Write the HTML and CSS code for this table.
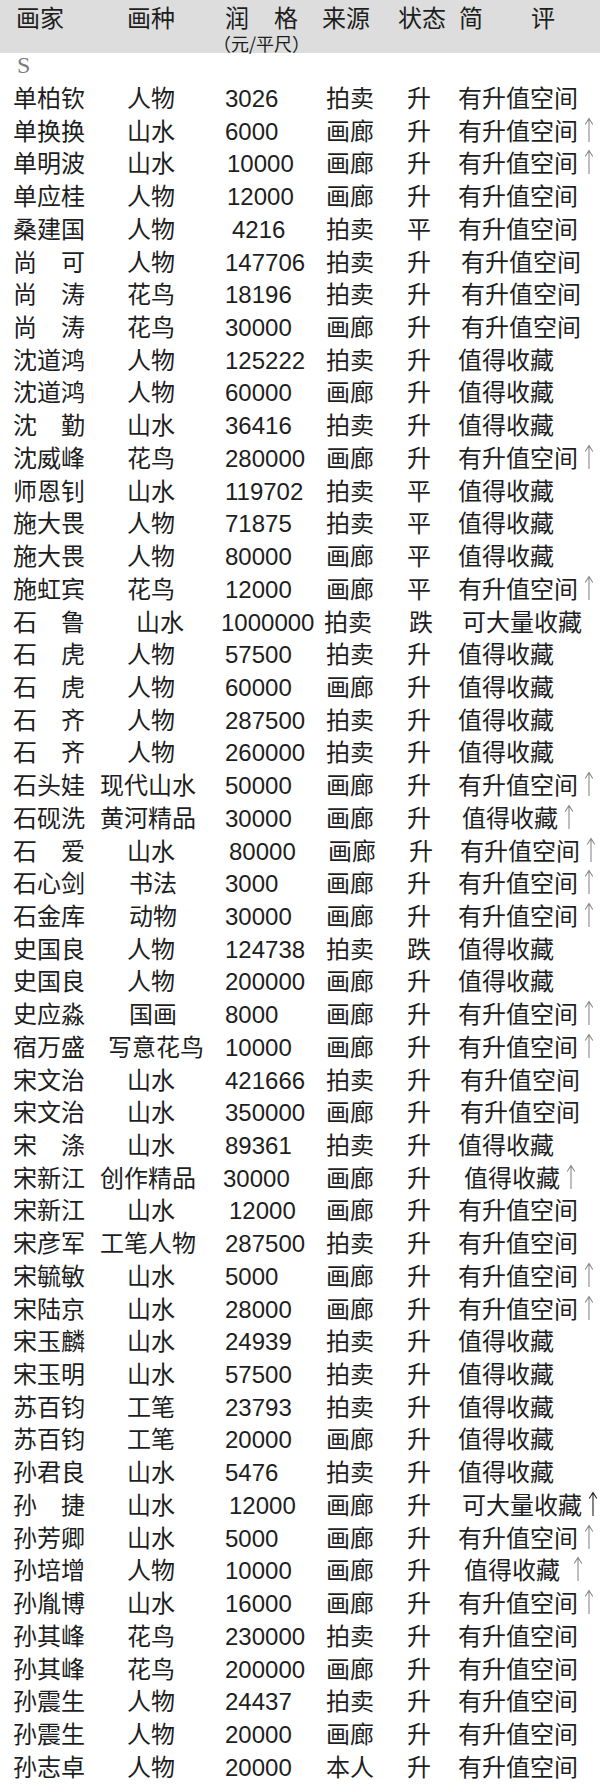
FILE: index.html
```html
<!DOCTYPE html>
<html lang="zh-CN">
<head>
<meta charset="utf-8">
<title>画家润格</title>
<link rel="stylesheet" href="styles.css">
</head>
<body>
<svg class="defs" width="0" height="0" aria-hidden="true">
  <symbol id="up" viewBox="0 0 10 25">
    <path d="M5 1.5V25M1.2 7.5L5 1.5L8.8 7.5" fill="none" stroke="currentColor" stroke-width="1.1"/>
  </symbol>
</svg>
<div class="page">
  <div class="head">
    <div class="hc">画家</div>
    <div class="hc">画种</div>
    <div class="hc hprice">
      <div class="pair"><span>润</span><span>格</span></div>
      <div class="unit">（元/平尺）</div>
    </div>
    <div class="hc">来源</div>
    <div class="hc">状态</div>
    <div class="hc pair wide"><span>简</span><span>评</span></div>
  </div>
  <div class="letter">S</div>
  <div class="list">
    <div class="row"><span class="nm">单柏钦</span><span class="gn">人物</span><span class="pr">3026</span><span class="src">拍卖</span><span class="st">升</span><span class="cm">有升值空间</span></div>
    <div class="row"><span class="nm">单换换</span><span class="gn">山水</span><span class="pr">6000</span><span class="src">画廊</span><span class="st">升</span><span class="cm">有升值空间<svg class="up"><use href="#up"/></svg></span></div>
    <div class="row"><span class="nm">单明波</span><span class="gn">山水</span><span class="pr r2">10000</span><span class="src">画廊</span><span class="st">升</span><span class="cm">有升值空间<svg class="up"><use href="#up"/></svg></span></div>
    <div class="row"><span class="nm">单应桂</span><span class="gn">人物</span><span class="pr r2">12000</span><span class="src">画廊</span><span class="st">升</span><span class="cm">有升值空间</span></div>
    <div class="row"><span class="nm">桑建国</span><span class="gn">人物</span><span class="pr r7">4216</span><span class="src">拍卖</span><span class="st">平</span><span class="cm">有升值空间</span></div>
    <div class="row"><span class="nm">尚　可</span><span class="gn">人物</span><span class="pr">147706</span><span class="src">拍卖</span><span class="st">升</span><span class="cm r3">有升值空间</span></div>
    <div class="row"><span class="nm">尚　涛</span><span class="gn">花鸟</span><span class="pr">18196</span><span class="src">拍卖</span><span class="st">升</span><span class="cm r3">有升值空间</span></div>
    <div class="row"><span class="nm">尚　涛</span><span class="gn">花鸟</span><span class="pr">30000</span><span class="src">画廊</span><span class="st">升</span><span class="cm r3">有升值空间</span></div>
    <div class="row"><span class="nm">沈道鸿</span><span class="gn">人物</span><span class="pr">125222</span><span class="src">拍卖</span><span class="st">升</span><span class="cm">值得收藏</span></div>
    <div class="row"><span class="nm">沈道鸿</span><span class="gn">人物</span><span class="pr">60000</span><span class="src">画廊</span><span class="st">升</span><span class="cm">值得收藏</span></div>
    <div class="row"><span class="nm">沈　勤</span><span class="gn">山水</span><span class="pr">36416</span><span class="src">拍卖</span><span class="st">升</span><span class="cm">值得收藏</span></div>
    <div class="row"><span class="nm">沈威峰</span><span class="gn">花鸟</span><span class="pr">280000</span><span class="src">画廊</span><span class="st">升</span><span class="cm">有升值空间<svg class="up"><use href="#up"/></svg></span></div>
    <div class="row"><span class="nm">师恩钊</span><span class="gn">山水</span><span class="pr">119702</span><span class="src">拍卖</span><span class="st">平</span><span class="cm">值得收藏</span></div>
    <div class="row"><span class="nm">施大畏</span><span class="gn">人物</span><span class="pr">71875</span><span class="src">拍卖</span><span class="st">平</span><span class="cm">值得收藏</span></div>
    <div class="row"><span class="nm">施大畏</span><span class="gn">人物</span><span class="pr">80000</span><span class="src">画廊</span><span class="st">平</span><span class="cm">值得收藏</span></div>
    <div class="row"><span class="nm">施虹宾</span><span class="gn">花鸟</span><span class="pr">12000</span><span class="src">画廊</span><span class="st">平</span><span class="cm">有升值空间<svg class="up"><use href="#up"/></svg></span></div>
    <div class="row"><span class="nm">石　鲁</span><span class="gn r9">山水</span><span class="pr l4">1000000</span><span class="src l2">拍卖</span><span class="st r2">跌</span><span class="cm r4">可大量收藏</span></div>
    <div class="row"><span class="nm">石　虎</span><span class="gn">人物</span><span class="pr">57500</span><span class="src">拍卖</span><span class="st">升</span><span class="cm">值得收藏</span></div>
    <div class="row"><span class="nm">石　虎</span><span class="gn">人物</span><span class="pr">60000</span><span class="src">画廊</span><span class="st">升</span><span class="cm">值得收藏</span></div>
    <div class="row"><span class="nm">石　齐</span><span class="gn">人物</span><span class="pr">287500</span><span class="src">拍卖</span><span class="st">升</span><span class="cm">值得收藏</span></div>
    <div class="row"><span class="nm">石　齐</span><span class="gn">人物</span><span class="pr">260000</span><span class="src">拍卖</span><span class="st">升</span><span class="cm">值得收藏</span></div>
    <div class="row"><span class="nm">石头娃</span><span class="gn g4">现代山水</span><span class="pr">50000</span><span class="src">画廊</span><span class="st">升</span><span class="cm">有升值空间<svg class="up"><use href="#up"/></svg></span></div>
    <div class="row"><span class="nm">石砚洗</span><span class="gn g4">黄河精品</span><span class="pr">30000</span><span class="src">画廊</span><span class="st">升</span><span class="cm r4">值得收藏<svg class="up"><use href="#up"/></svg></span></div>
    <div class="row"><span class="nm">石　爱</span><span class="gn">山水</span><span class="pr r4">80000</span><span class="src r2">画廊</span><span class="st r2">升</span><span class="cm r2">有升值空间<svg class="up"><use href="#up"/></svg></span></div>
    <div class="row"><span class="nm">石心剑</span><span class="gn r2">书法</span><span class="pr">3000</span><span class="src">画廊</span><span class="st">升</span><span class="cm">有升值空间<svg class="up"><use href="#up"/></svg></span></div>
    <div class="row"><span class="nm">石金库</span><span class="gn r2">动物</span><span class="pr">30000</span><span class="src">画廊</span><span class="st">升</span><span class="cm">有升值空间<svg class="up"><use href="#up"/></svg></span></div>
    <div class="row"><span class="nm">史国良</span><span class="gn">人物</span><span class="pr">124738</span><span class="src">拍卖</span><span class="st">跌</span><span class="cm">值得收藏</span></div>
    <div class="row"><span class="nm">史国良</span><span class="gn">人物</span><span class="pr">200000</span><span class="src">画廊</span><span class="st">升</span><span class="cm">值得收藏</span></div>
    <div class="row"><span class="nm">史应淼</span><span class="gn r2">国画</span><span class="pr">8000</span><span class="src">画廊</span><span class="st">升</span><span class="cm">有升值空间<svg class="up"><use href="#up"/></svg></span></div>
    <div class="row"><span class="nm">宿万盛</span><span class="gn g4w">写意花鸟</span><span class="pr">10000</span><span class="src">画廊</span><span class="st">升</span><span class="cm">有升值空间<svg class="up"><use href="#up"/></svg></span></div>
    <div class="row"><span class="nm">宋文治</span><span class="gn">山水</span><span class="pr">421666</span><span class="src">拍卖</span><span class="st">升</span><span class="cm r2">有升值空间</span></div>
    <div class="row"><span class="nm">宋文治</span><span class="gn">山水</span><span class="pr">350000</span><span class="src">画廊</span><span class="st">升</span><span class="cm r2">有升值空间</span></div>
    <div class="row"><span class="nm">宋　涤</span><span class="gn">山水</span><span class="pr">89361</span><span class="src">拍卖</span><span class="st">升</span><span class="cm">值得收藏</span></div>
    <div class="row"><span class="nm">宋新江</span><span class="gn g4">创作精品</span><span class="pr l2">30000</span><span class="src">画廊</span><span class="st">升</span><span class="cm r6">值得收藏<svg class="up"><use href="#up"/></svg></span></div>
    <div class="row"><span class="nm">宋新江</span><span class="gn">山水</span><span class="pr r4">12000</span><span class="src">画廊</span><span class="st">升</span><span class="cm">有升值空间</span></div>
    <div class="row"><span class="nm">宋彦军</span><span class="gn g4">工笔人物</span><span class="pr">287500</span><span class="src">拍卖</span><span class="st">升</span><span class="cm">有升值空间</span></div>
    <div class="row"><span class="nm">宋毓敏</span><span class="gn">山水</span><span class="pr">5000</span><span class="src">画廊</span><span class="st">升</span><span class="cm">有升值空间<svg class="up"><use href="#up"/></svg></span></div>
    <div class="row"><span class="nm">宋陆京</span><span class="gn">山水</span><span class="pr">28000</span><span class="src">画廊</span><span class="st">升</span><span class="cm">有升值空间<svg class="up"><use href="#up"/></svg></span></div>
    <div class="row"><span class="nm">宋玉麟</span><span class="gn">山水</span><span class="pr">24939</span><span class="src">拍卖</span><span class="st">升</span><span class="cm">值得收藏</span></div>
    <div class="row"><span class="nm">宋玉明</span><span class="gn">山水</span><span class="pr">57500</span><span class="src">拍卖</span><span class="st">升</span><span class="cm">值得收藏</span></div>
    <div class="row"><span class="nm">苏百钧</span><span class="gn">工笔</span><span class="pr">23793</span><span class="src">拍卖</span><span class="st">升</span><span class="cm">值得收藏</span></div>
    <div class="row"><span class="nm">苏百钧</span><span class="gn">工笔</span><span class="pr">20000</span><span class="src">画廊</span><span class="st">升</span><span class="cm">值得收藏</span></div>
    <div class="row"><span class="nm">孙君良</span><span class="gn">山水</span><span class="pr">5476</span><span class="src">拍卖</span><span class="st">升</span><span class="cm">值得收藏</span></div>
    <div class="row"><span class="nm">孙　捷</span><span class="gn">山水</span><span class="pr r4">12000</span><span class="src">画廊</span><span class="st">升</span><span class="cm r4">可大量收藏<svg class="up dark"><use href="#up"/></svg></span></div>
    <div class="row"><span class="nm">孙芳卿</span><span class="gn">山水</span><span class="pr">5000</span><span class="src">画廊</span><span class="st">升</span><span class="cm">有升值空间<svg class="up"><use href="#up"/></svg></span></div>
    <div class="row"><span class="nm">孙培增</span><span class="gn">人物</span><span class="pr">10000</span><span class="src">画廊</span><span class="st">升</span><span class="cm r6">值得收藏<svg class="up far"><use href="#up"/></svg></span></div>
    <div class="row"><span class="nm">孙胤博</span><span class="gn">山水</span><span class="pr">16000</span><span class="src">画廊</span><span class="st">升</span><span class="cm">有升值空间<svg class="up"><use href="#up"/></svg></span></div>
    <div class="row"><span class="nm">孙其峰</span><span class="gn">花鸟</span><span class="pr">230000</span><span class="src">拍卖</span><span class="st">升</span><span class="cm">有升值空间</span></div>
    <div class="row"><span class="nm">孙其峰</span><span class="gn">花鸟</span><span class="pr">200000</span><span class="src">画廊</span><span class="st">升</span><span class="cm">有升值空间</span></div>
    <div class="row"><span class="nm">孙震生</span><span class="gn">人物</span><span class="pr">24437</span><span class="src">拍卖</span><span class="st">升</span><span class="cm">有升值空间</span></div>
    <div class="row"><span class="nm">孙震生</span><span class="gn">人物</span><span class="pr">20000</span><span class="src">画廊</span><span class="st">升</span><span class="cm">有升值空间</span></div>
    <div class="row"><span class="nm">孙志卓</span><span class="gn">人物</span><span class="pr">20000</span><span class="src">本人</span><span class="st">升</span><span class="cm">有升值空间</span></div>
  </div>
</div>
</body>
</html>
```

FILE: styles.css
```css
html, body {
  margin: 0;
  padding: 0;
  background: #ffffff;
}

body {
  width: 600px;
  font-family: "Noto Sans CJK SC", "Noto Sans CJK JP", sans-serif;
  color: #1e1e1e;
}

.defs {
  position: absolute;
  width: 0;
  height: 0;
  overflow: hidden;
}

.page {
  width: 600px;
}

/* header bar */
.head {
  height: 53px;
  background: #dddddd;
  box-sizing: border-box;
  padding: 2px 0 0 16px;
  display: grid;
  grid-template-columns: 111px 98px 97px 76px 61px 1fr;
  align-items: start;
  font-size: 24px;
  line-height: 30px;
}

.hc {
  white-space: nowrap;
}

.pair {
  display: flex;
  justify-content: space-between;
  width: 73px;
}

.pair.wide {
  width: 96px;
}

.unit {
  margin: 3px 0 0 -12px;
  font-size: 18px;
  line-height: 16px;
  white-space: nowrap;
}

/* letter divider */
.letter {
  height: 28px;
  box-sizing: border-box;
  padding-left: 17px;
  font-family: "Liberation Serif", "DejaVu Serif", serif;
  font-size: 24px;
  font-weight: 400;
  line-height: 25px;
  color: #7c7c7c;
}

/* data rows */
.row {
  height: 32.73px;
  box-sizing: border-box;
  padding-left: 13px;
  display: grid;
  grid-template-columns: 114px 98px 101px 81px 51px 1fr;
  align-items: baseline;
  font-size: 24px;
  line-height: 32.73px;
  white-space: nowrap;
}

.pr {
  font-family: "Liberation Sans", "Noto Sans CJK SC", sans-serif;
  font-size: 24px;
}

.g4 {
  margin-left: -27px;
}

.g4w {
  margin-left: -19px;
}

.r2 { margin-left: 2px; }
.r3 { margin-left: 3px; }
.r4 { margin-left: 4px; }
.r6 { margin-left: 6px; }
.r7 { margin-left: 7px; }
.r9 { margin-left: 9px; }
.l2 { margin-left: -2px; }
.l4 { margin-left: -4px; }

.up {
  width: 10px;
  height: 25px;
  margin-left: 6px;
  vertical-align: -2px;
  color: #8a8a8a;
}

.up.dark {
  color: #222222;
  stroke-width: 1.6;
}

.up.far {
  margin-left: 13px;
}
```
